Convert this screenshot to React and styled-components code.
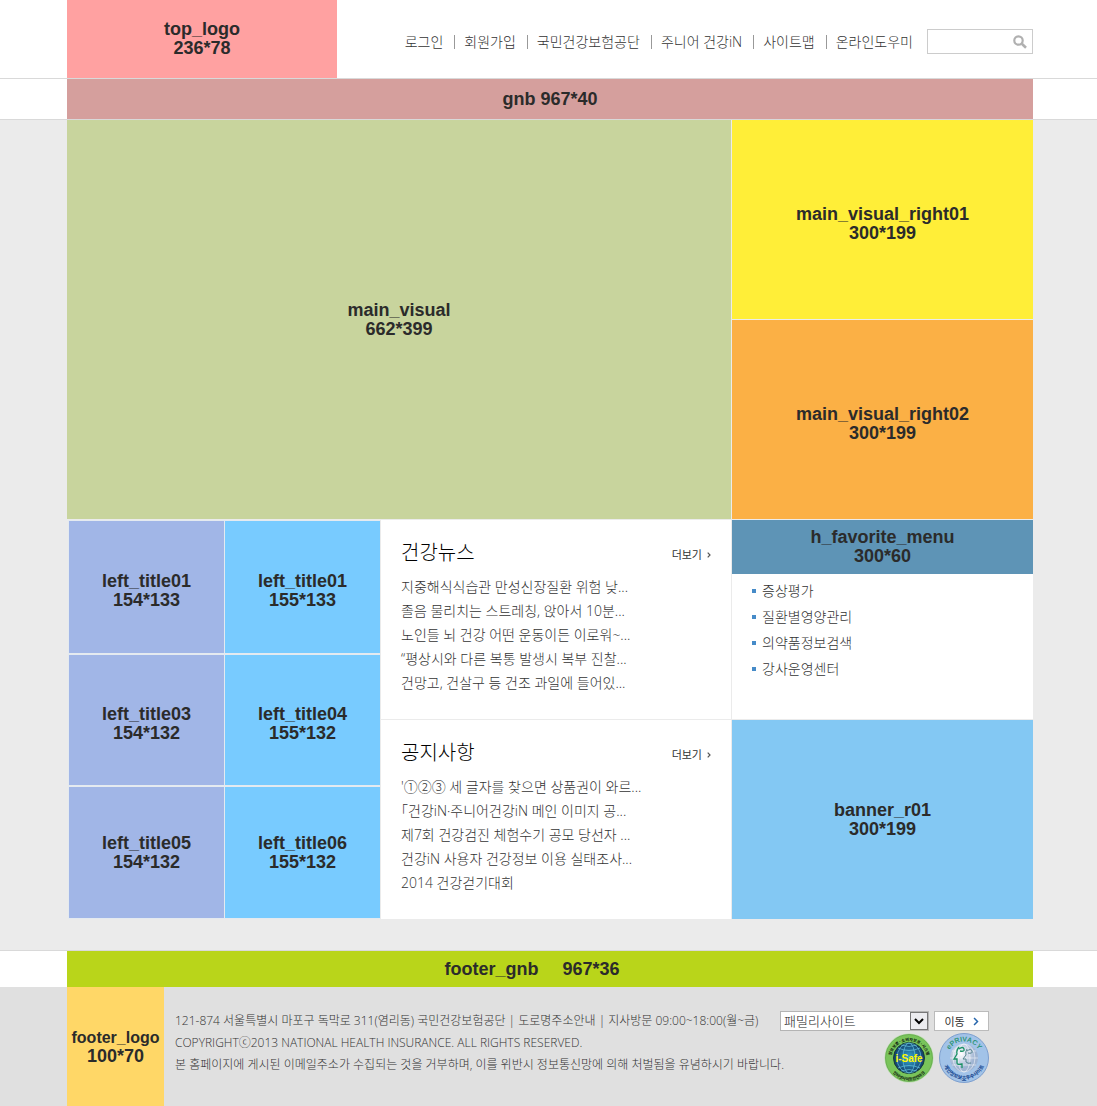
import React from "react";
import styled, { createGlobalStyle } from "styled-components";

const GlobalStyle = createGlobalStyle`
  * { box-sizing: border-box; }
  body {
    margin: 0;
    background: #e0e0e0;
    color: #333;
    font-family: "Open Sans", "Noto Sans CJK KR", sans-serif;
    font-size: 14px;
    font-weight: 300;
  }
  h1, h2, p, ul { margin: 0; padding: 0; }
  ul { list-style: none; }
  a { color: inherit; text-decoration: none; }
`;

const Band = styled.div`
  background: ${(p) => p.$bg};
  border-bottom: ${(p) => (p.$line ? "1px solid #d9d9d9" : "0")};
  padding: 0 64px 0 67px;
`;

const HeaderRow = styled.header`
  display: flex;
  justify-content: space-between;
  height: 78px;
`;

const Tile = styled.div`
  display: flex;
  flex-direction: ${(p) => (p.$inline ? "row" : "column")};
  align-items: center;
  justify-content: center;
  gap: ${(p) => (p.$inline ? "24px" : "0")};
  width: ${(p) => p.$width || "auto"};
  height: ${(p) => p.$height || "auto"};
  padding-top: ${(p) => (p.$lowered ? "8px" : "0")};
  padding-right: ${(p) => (p.$inline ? "36px" : "0")};
  background: ${(p) => p.$bg};
  color: #2b2b2b;
  font: bold 18px/19px "Liberation Sans", Arial, sans-serif;
  white-space: nowrap;
`;

const SmallLabel = styled.span`
  font-size: 16px;
`;

const HeaderTools = styled.div`
  display: flex;
  align-items: center;
  gap: 14px;
  padding-top: 5px;
`;

const NavList = styled.ul`
  display: flex;
  line-height: 14px;
  white-space: nowrap;
`;

const NavItem = styled.li`
  & + & {
    margin-left: 11px;
    padding-left: 9px;
    border-left: 1px solid #999;
  }
`;

const SearchBox = styled.form`
  display: flex;
  align-items: center;
  width: 106px;
  height: 25px;
  border: 1px solid #ccc;
  background: #fff;
`;

const SearchInput = styled.input`
  flex: 1;
  min-width: 0;
  height: 100%;
  padding: 0 4px;
  border: 0;
  outline: 0;
  background: transparent;
`;

const SearchButton = styled.button`
  display: flex;
  padding: 0 5px;
  border: 0;
  background: transparent;
`;

const MainGrid = styled.main`
  display: grid;
  grid-template-columns: minmax(0, 1fr) 301px;
  column-gap: 1px;
  padding-bottom: 31px;
`;

const VisualSide = styled.div`
  display: grid;
  grid-template-rows: 199px 199px;
  row-gap: 1px;
  padding-bottom: 1px;
`;

const LowerLeft = styled.div`
  display: grid;
  grid-template-columns: 312px minmax(0, 1fr);
  column-gap: 1px;
  padding-left: 1px;
`;

const TitleGrid = styled.div`
  display: grid;
  grid-template-columns: 155px 155px;
  grid-template-rows: 132px 130px 131px;
  gap: 2px 1px;
  padding: 1px 0 1px 1px;
  background: #e4eaf0;
`;

const BoardColumn = styled.div`
  display: grid;
  grid-template-rows: 199px 199px;
  row-gap: 1px;
`;

const Board = styled.section`
  padding: 20px 20px 0;
  background: #fff;
`;

const BoardHead = styled.div`
  display: flex;
  justify-content: space-between;
  align-items: center;
  height: 26px;
  margin-bottom: 9px;
`;

const BoardTitle = styled.h2`
  color: #000;
  font-size: 20px;
  line-height: 26px;
  font-weight: 300;
`;

const MoreLink = styled.a`
  display: flex;
  align-items: center;
  gap: 5px;
  padding-top: 4px;
  font-size: 11px;
  line-height: 16px;
  font-weight: 400;
`;

const BoardItem = styled.li`
  line-height: 24px;
  white-space: nowrap;
`;

const SideColumn = styled.div`
  display: grid;
  grid-template-rows: 199px 199px;
  row-gap: 1px;
`;

const Favorite = styled.section`
  background: #fff;
`;

const FavoriteList = styled.ul`
  padding: 4px 20px;
`;

const FavoriteItem = styled.li`
  display: flex;
  align-items: center;
  gap: 6px;
  line-height: 26px;
  &::before {
    content: "";
    width: 4px;
    height: 4px;
    background: #468bc8;
  }
`;

const FooterRow = styled.footer`
  display: flex;
  height: 119px;
  font-size: 12px;
  line-height: 22px;
`;

const FooterBody = styled.div`
  flex: 1;
  min-width: 0;
  padding: 23px 44px 0 11px;
  white-space: nowrap;
`;

const FooterLine = styled.div`
  display: flex;
  justify-content: space-between;
`;

const SiteForm = styled.form`
  display: flex;
  align-items: center;
  gap: 5px;
`;

const SelectWrap = styled.div`
  position: relative;
  width: 149px;
  height: 20px;
`;

const SiteSelect = styled.select`
  appearance: none;
  width: 100%;
  height: 100%;
  padding: 0 24px 0 3px;
  border: 1px solid #b4b4b4;
  border-radius: 0;
  background: #fff;
  color: #222;
  font: 300 13px/18px "Noto Sans CJK KR", sans-serif;
`;

const SelectArrow = styled.span`
  position: absolute;
  top: 1px;
  right: 1px;
  display: flex;
  align-items: center;
  justify-content: center;
  width: 18px;
  height: 18px;
  border: 1px solid #777;
  background: #ececef;
  pointer-events: none;
`;

const GoButton = styled.button`
  display: flex;
  align-items: center;
  justify-content: center;
  gap: 8px;
  width: 55px;
  height: 20px;
  padding: 0;
  border: 1px solid #bbb;
  background: #fff;
  color: #333;
  font: 400 11px/18px "Noto Sans CJK KR", sans-serif;
`;

const Marks = styled.div`
  display: flex;
  gap: 5px;
  padding-top: 1px;
`;

const navItems = ["로그인", "회원가입", "국민건강보험공단", "주니어 건강iN", "사이트맵", "온라인도우미"];

const titles = [
  ["left_title01", "154*133"],
  ["left_title01", "155*133"],
  ["left_title03", "154*132"],
  ["left_title04", "155*132"],
  ["left_title05", "154*132"],
  ["left_title06", "155*132"],
];

const news = [
  "지중해식식습관 만성신장질환 위험 낮...",
  "졸음 물리치는 스트레칭, 앉아서 10분...",
  "노인들 뇌 건강 어떤 운동이든 이로워~...",
  "“평상시와 다른 복통 발생시 복부 진찰...",
  "건망고, 건살구 등 건조 과일에 들어있...",
];

const notices = [
  "'①②③ 세 글자를 찾으면 상품권이 와르...",
  "｢건강iN·주니어건강iN 메인 이미지 공...",
  "제7회 건강검진 체험수기 공모 당선자 ...",
  "건강iN 사용자 건강정보 이용 실태조사...",
  "2014 건강걷기대회",
];

const favorites = ["증상평가", "질환별영양관리", "의약품정보검색", "강사운영센터"];

function Chevron({ color, width, height, stroke }) {
  return (
    <svg width={width} height={height} viewBox="0 0 4 6" fill="none" aria-hidden="true">
      <path d="M.7.7 3 3 .7 5.3" stroke={color} strokeWidth={stroke} />
    </svg>
  );
}

function BoardPanel({ title, items }) {
  return (
    <Board>
      <BoardHead>
        <BoardTitle>{title}</BoardTitle>
        <MoreLink href="#more">
          더보기
          <Chevron color="#555" width={4} height={6} stroke={1.2} />
        </MoreLink>
      </BoardHead>
      <ul>
        {items.map((item) => (
          <BoardItem key={item}>
            <a href="#article">{item}</a>
          </BoardItem>
        ))}
      </ul>
    </Board>
  );
}

function SafeMark() {
  return (
    <svg width="50" height="50" viewBox="0 0 50 50" role="img" aria-label="i-Safe">
      <defs>
        <radialGradient id="safeGlobe">
          <stop offset="0" stopColor="#35a9d6" />
          <stop offset="1" stopColor="#123c68" />
        </radialGradient>
        <path id="safeTop" d="M7 26a18 18 0 0 1 36 0" />
        <path id="safeBottom" d="M4.5 27a20.5 20.5 0 0 0 41 0" />
      </defs>
      <circle cx="25" cy="25" r="24.5" fill="#b9dfa9" />
      <circle cx="25" cy="25" r="23.5" fill="#79c45a" stroke="#4f983a" strokeWidth=".6" />
      <circle cx="25" cy="25" r="15.5" fill="url(#safeGlobe)" stroke="#173f35" />
      <g fill="none" stroke="#71d3ec" strokeWidth=".6">
        <ellipse cx="25" cy="25" rx="6" ry="15" />
        <ellipse cx="25" cy="25" rx="12" ry="15" />
        <path d="M14 15q11 5 22 0M14 35q11-5 22 0M17 12q8 3 16 0M17 38q8-3 16 0" />
      </g>
      <g fill="#142b14" fontFamily="Noto Sans CJK KR, sans-serif" fontSize="4" fontWeight="900" textAnchor="middle">
        <text><textPath href="#safeTop" startOffset="50%">정보보호·소비자보호·시스템</textPath></text>
        <text><textPath href="#safeBottom" startOffset="50%">인터넷사이트안전마크</textPath></text>
      </g>
      <text x="25" y="29" textAnchor="middle" fill="#fff600" fontFamily="Liberation Sans Narrow, Liberation Sans, sans-serif" fontSize="10" fontWeight="bold">
        i-Safe
      </text>
    </svg>
  );
}

function PrivacyMark() {
  return (
    <svg width="50" height="50" viewBox="0 0 50 50" role="img" aria-label="ePRIVACY">
      <defs>
        <radialGradient id="privacyGlobe" cx=".4" cy=".35">
          <stop offset="0" stopColor="#fff" />
          <stop offset="1" stopColor="#9fb4d2" />
        </radialGradient>
        <path id="privacyTop" d="M8.5 25a16.5 16.5 0 0 1 33 0" />
        <path id="privacyBottom" d="M3.5 25a21.5 21.5 0 0 0 43 0" />
      </defs>
      <circle cx="25" cy="25" r="24.5" fill="#a2c3e8" stroke="#7d9fce" />
      <circle cx="25" cy="25" r="14" fill="url(#privacyGlobe)" />
      <g fill="none" stroke="#fff" strokeWidth=".5">
        <ellipse cx="25" cy="25" rx="6" ry="14" />
        <ellipse cx="25" cy="25" rx="11" ry="14" />
        <path d="M11 25h28M13 18h24M13 32h24" />
      </g>
      <path d="M20 14q-3 4-2 7l-3 5h3v4q0 2 5 1v4M20 16q4-3 5 0t-4 2" fill="none" stroke="#1a9164" strokeWidth="1.3" />
      <path d="M28 16q-2 3-1 6l-3 4h3v3q2 2 5 1M28 18q4-3 5 0t-4 2" fill="none" stroke="#55858f" />
      <text fill="#2f9579" fontFamily="Liberation Sans, sans-serif" fontSize="7" fontWeight="bold" textAnchor="middle">
        <textPath href="#privacyTop" startOffset="50%">ePRIVACY</textPath>
      </text>
      <text fill="#234f96" fontFamily="Noto Sans CJK KR, sans-serif" fontSize="5" fontWeight="900" textAnchor="middle">
        <textPath href="#privacyBottom" startOffset="50%">개인정보보호우수사이트</textPath>
      </text>
    </svg>
  );
}

export default function App() {
  return (
    <>
      <GlobalStyle />
      <Band $bg="#fff" $line>
        <HeaderRow>
          <Tile as="h1" $bg="#ffa1a1" $width="270px">
            <span>top_logo</span>
            <span>236*78</span>
          </Tile>
          <HeaderTools>
            <NavList>
              {navItems.map((item) => (
                <NavItem key={item}>
                  <a href="#menu">{item}</a>
                </NavItem>
              ))}
            </NavList>
            <SearchBox role="search">
              <SearchInput type="text" aria-label="검색어" />
              <SearchButton type="button" aria-label="검색">
                <svg width="14" height="14" viewBox="0 0 14 14" fill="none" stroke="#b0b0b0" aria-hidden="true">
                  <circle cx="5.5" cy="5.5" r="4.2" strokeWidth="2.2" />
                  <path d="m8.8 8.8 4.2 4" strokeWidth="2.6" />
                </svg>
              </SearchButton>
            </SearchBox>
          </HeaderTools>
        </HeaderRow>
      </Band>
      <Band $bg="#fff" $line>
        <Tile as="nav" $bg="#d59f9d" $height="40px">gnb 967*40</Tile>
      </Band>
      <Band $bg="#ebebeb" $line>
        <MainGrid>
          <Tile $bg="#c8d49d" $height="399px">
            <span>main_visual</span>
            <span>662*399</span>
          </Tile>
          <VisualSide>
            <Tile $bg="#ffee38" $lowered>
              <span>main_visual_right01</span>
              <span>300*199</span>
            </Tile>
            <Tile $bg="#fbb045" $lowered>
              <span>main_visual_right02</span>
              <span>300*199</span>
            </Tile>
          </VisualSide>
          <LowerLeft>
            <TitleGrid>
              {titles.map(([name, size], i) => (
                <Tile key={i} $bg={i % 2 ? "#78cbff" : "#a1b6e7"} $lowered={i < 4}>
                  <span>{name}</span>
                  <span>{size}</span>
                </Tile>
              ))}
            </TitleGrid>
            <BoardColumn>
              <BoardPanel title="건강뉴스" items={news} />
              <BoardPanel title="공지사항" items={notices} />
            </BoardColumn>
          </LowerLeft>
          <SideColumn>
            <Favorite>
              <Tile as="h2" $bg="#5e94b6" $height="54px">
                <span>h_favorite_menu</span>
                <span>300*60</span>
              </Tile>
              <FavoriteList>
                {favorites.map((item) => (
                  <FavoriteItem key={item}>
                    <a href="#favorite">{item}</a>
                  </FavoriteItem>
                ))}
              </FavoriteList>
            </Favorite>
            <Tile $bg="#83c8f3">
              <span>banner_r01</span>
              <span>300*199</span>
            </Tile>
          </SideColumn>
        </MainGrid>
      </Band>
      <Band $bg="#fff">
        <Tile as="nav" $bg="#b9d51a" $height="36px" $inline>
          <span>footer_gnb</span>
          <span>967*36</span>
        </Tile>
      </Band>
      <Band $bg="#e0e0e0">
        <FooterRow>
          <Tile $bg="#ffd767" $width="97px">
            <SmallLabel>footer_logo</SmallLabel>
            <span>100*70</span>
          </Tile>
          <FooterBody>
            <FooterLine>
              <p>121-874 서울특별시 마포구 독막로 311(염리동) 국민건강보험공단 | 도로명주소안내 | 지사방문 09:00~18:00(월~금)</p>
              <SiteForm>
                <SelectWrap>
                  <SiteSelect aria-label="패밀리사이트" defaultValue="family">
                    <option value="family">패밀리사이트</option>
                  </SiteSelect>
                  <SelectArrow>
                    <svg width="10" height="7" viewBox="0 0 10 7" fill="none" aria-hidden="true">
                      <path d="m1 1 4 4 4-4" stroke="#000" strokeWidth="2" />
                    </svg>
                  </SelectArrow>
                </SelectWrap>
                <GoButton type="button">
                  이동
                  <Chevron color="#2766ac" width={6} height={9} stroke={1} />
                </GoButton>
              </SiteForm>
            </FooterLine>
            <FooterLine>
              <div>
                <p>COPYRIGHTⓒ2013 NATIONAL HEALTH INSURANCE. ALL RIGHTS RESERVED.</p>
                <p>본 홈페이지에 게시된 이메일주소가 수집되는 것을 거부하며, 이를 위반시 정보통신망에 의해 처벌됨을 유념하시기 바랍니다.</p>
              </div>
              <Marks>
                <SafeMark />
                <PrivacyMark />
              </Marks>
            </FooterLine>
          </FooterBody>
        </FooterRow>
      </Band>
    </>
  );
}
